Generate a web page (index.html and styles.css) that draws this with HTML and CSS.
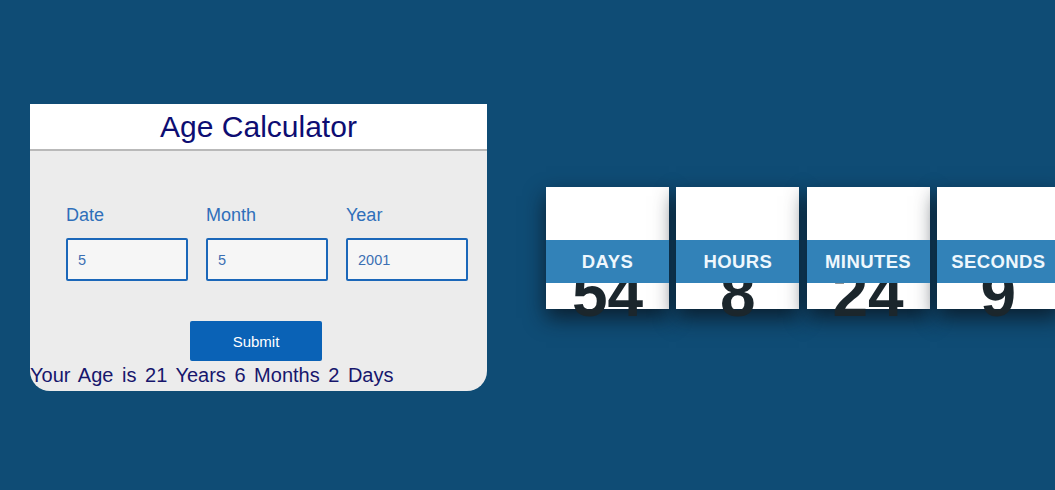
FILE: index.html
```html
<!DOCTYPE html>
<html>
<head>
<meta charset="utf-8">
<link rel="stylesheet" href="styles.css">
</head>
<body>
<main class="page">
  <section class="card">
    <header class="card-head">
      <h1 class="title">Age Calculator</h1>
    </header>
    <div class="card-body">
      <div class="fields">
        <label class="field">
          <span class="field-label">Date</span>
          <input class="field-input" type="text" value="5">
        </label>
        <label class="field">
          <span class="field-label">Month</span>
          <input class="field-input" type="text" value="5">
        </label>
        <label class="field">
          <span class="field-label">Year</span>
          <input class="field-input" type="text" value="2001">
        </label>
      </div>
      <div class="actions">
        <button class="submit" type="button">Submit</button>
      </div>
      <p class="result">Your Age is 21 Years 6 Months 2 Days</p>
    </div>
  </section>

  <section class="countdown">
    <div class="tile">
      <div class="tile-label">Days</div>
      <div class="tile-num">54</div>
    </div>
    <div class="tile">
      <div class="tile-label">Hours</div>
      <div class="tile-num">8</div>
    </div>
    <div class="tile">
      <div class="tile-label">Minutes</div>
      <div class="tile-num">24</div>
    </div>
    <div class="tile">
      <div class="tile-label">Seconds</div>
      <div class="tile-num">9</div>
    </div>
  </section>
</main>
</body>
</html>
```

FILE: styles.css
```css
html, body {
  margin: 0;
  padding: 0;
  overflow: hidden;
}

body {
  background: #0f4c75;
  font-family: "Liberation Sans", Arial, sans-serif;
}

.page {
  width: 1055px;
  height: 490px;
  display: flex;
  align-items: center;
  padding-left: 30px;
  box-sizing: border-box;
}

/* ---------- Age calculator card ---------- */
.card {
  width: 457px;
  flex: none;
  background: #ececec;
  border-radius: 0 0 20px 20px;
  margin-top: 5px;
}

.card-head {
  background: #ffffff;
  height: 45px;
  border-bottom: 2px solid #b9b9b9;
  display: flex;
  align-items: center;
  justify-content: center;
}

.title {
  margin: 0;
  font-size: 30px;
  font-weight: normal;
  color: #0d0d72;
  line-height: 1;
}

.card-body {
  padding: 54px 0 4px 0;
}

.fields {
  display: flex;
  gap: 18px;
  padding-left: 36px;
}

.field {
  display: flex;
  flex-direction: column;
  width: 122px;
}

.field-label {
  font-size: 18px;
  color: #2f6fba;
  line-height: 21px;
  margin-bottom: 12px;
}

.field-input {
  box-sizing: border-box;
  width: 122px;
  height: 43px;
  border: 2px solid #1b67b9;
  border-radius: 2px;
  background: #f6f6f6;
  padding: 0 10px;
  font-family: "Liberation Sans", Arial, sans-serif;
  font-size: 14.5px;
  color: #3b6fb3;
  outline: none;
}

.actions {
  display: flex;
  padding-left: 160px;
  margin-top: 40px;
}

.submit {
  width: 132px;
  height: 40px;
  border: none;
  border-radius: 2px;
  background: #0a62b6;
  color: #ffffff;
  font-family: "Liberation Sans", Arial, sans-serif;
  font-size: 15px;
}

.result {
  margin: 3px 0 0 0;
  font-size: 20px;
  line-height: 23px;
  word-spacing: 3px;
  color: #17166c;
}

/* ---------- Countdown ---------- */
.countdown {
  display: flex;
  gap: 7.3px;
  margin-left: 59px;
  margin-top: 6px;
  flex: none;
}

.tile {
  width: 123px;
  height: 122px;
  background: #ffffff;
  box-shadow: 0 9px 20px rgba(10, 20, 30, 0.8);
  display: flex;
  flex-direction: column;
  flex: none;
}

.tile-label {
  position: relative;
  z-index: 1;
  flex: none;
  margin-top: 53px;
  height: 43px;
  background: #3282b8;
  color: #eef7fd;
  font-weight: bold;
  font-size: 18.5px;
  letter-spacing: 0.4px;
  text-transform: uppercase;
  display: flex;
  align-items: center;
  justify-content: center;
}

.tile-num {
  flex: none;
  margin-top: -21px;
  font-size: 64px;
  font-weight: bold;
  line-height: 64px;
  height: 64px;
  color: #1b262c;
  text-align: center;
}
```
